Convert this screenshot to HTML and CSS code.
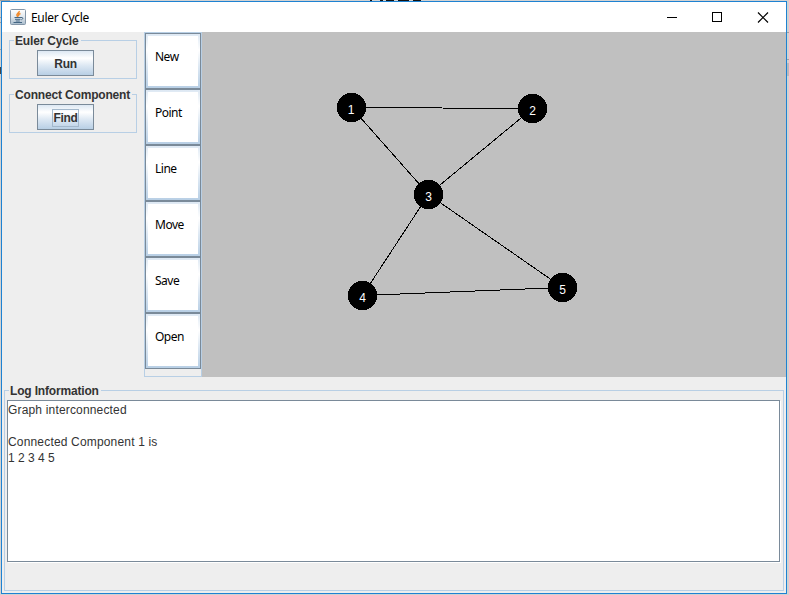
FILE: index.html
```html
<!DOCTYPE html>
<html lang="en">
<head>
<meta charset="utf-8">
<title>Euler Cycle</title>
<link rel="stylesheet" href="styles.css">
</head>
<body>
<svg class="desktop" width="789" height="595" shape-rendering="crispEdges" aria-hidden="true">
  <path fill="#a0a0a0" d="M0 0h10v1H0zM0 17h1v1H0zM0 22h1v1H0zM0 49h1v1H0zM787 32h2v1h-2zM787 59h2v1h-2z"/>
  <path fill="#444" d="M0 67h1v7H0z"/>
  <path fill="#b9b9bd" d="M787 63h2v13h-2z"/>
  <path fill="#111" d="M370 0h2v1h-2zM380 0h3v1h-3zM386 0h8v1h-8zM398 0h11v1h-11zM413 0h8v1h-8z"/>
</svg>
<div class="window">
  <header class="titlebar">
    <svg class="app-icon" width="16" height="16" viewBox="0 0 16 16">
      <defs><linearGradient id="tile" x2="0" y2="1"><stop stop-color="#fff"/><stop offset=".5" stop-color="#e0e7ed"/><stop offset="1" stop-color="#a9bccc"/></linearGradient></defs>
      <rect x=".5" y=".5" width="15" height="15" rx="1" fill="url(#tile)" stroke="#8496a8"/>
      <path d="M9.2 2C9.8 4 6 4.500 7 6.500L8 8M10.500 4.500C8 5.500 8.300 6 9 7" fill="none" stroke="#f08a2c" stroke-width="1.500"/>
      <path d="M4.500 8.500h6.500M5 10.300h5.500M5.800 12h4M11 8.500c2.500-.5 2.300 1.700.3 2.300M3.500 13.500h8.500" fill="none" stroke="#446684"/>
    </svg>
    <span class="title">Euler Cycle</span>
    <svg class="controls" width="102" height="11" shape-rendering="crispEdges" fill="none" stroke="#000">
      <path d="M0 5.500h10M45.500.5h9v9h-9z"/>
      <path d="M91 .5l10 10M101 .5l-10 10" shape-rendering="auto" stroke-width="1.200"/>
    </svg>
  </header>
  <main class="workspace">
    <aside class="sidebar">
      <fieldset class="group"><legend>Euler Cycle</legend><button class="action">Run</button></fieldset>
      <fieldset class="group"><legend>Connect Component</legend><button class="action"><span class="focus">Find</span></button></fieldset>
    </aside>
    <nav class="tools">
      <button class="tool"><span>New</span></button>
      <button class="tool"><span>Point</span></button>
      <button class="tool"><span>Line</span></button>
      <button class="tool"><span>Move</span></button>
      <button class="tool"><span>Save</span></button>
      <button class="tool"><span>Open</span></button>
    </nav>
    <svg class="canvas" width="584" height="345" viewBox="202 32 584 345">
      <g stroke="#000" fill="none" shape-rendering="crispEdges">
        <path d="M351.500 107.500L532.500 108.500L428.500 194.500zM428.500 194.500L362.500 295.500L562.500 287.500z"/>
      </g>
      <g class="nodes" shape-rendering="crispEdges">
        <circle cx="351.500" cy="107.500" r="14.700"/>
        <circle cx="532.500" cy="108.500" r="14.700"/>
        <circle cx="428.500" cy="194.500" r="14.700"/>
        <circle cx="362.500" cy="295.500" r="14.700"/>
        <circle cx="562.500" cy="287.500" r="14.700"/>
      </g>
      <g class="labels">
        <text x="351" y="114">1</text>
        <text x="532.500" y="115">2</text>
        <text x="428.500" y="201">3</text>
        <text x="362.500" y="302">4</text>
        <text x="562.500" y="294">5</text>
      </g>
    </svg>
  </main>
  <fieldset class="log">
    <legend>Log Information</legend>
    <div class="log-text"><span>Graph interconnected</span>

<span>Connected Component 1 is</span>
1 2 3 4 5</div>
  </fieldset>
</div>
</body>
</html>
```
FILE: styles.css
```css
* { box-sizing: border-box; }
body {
  margin: 0;
  width: 789px;
  height: 595px;
  padding: 1px;
  overflow: hidden;
  background: #d2d2d2;
  font-family: "Liberation Sans", Arial, sans-serif;
  font-size: 12px;
  color: #333;
}
.desktop { position: absolute; left: 0; top: 0; }
.window {
  position: relative;
  width: 786px;
  height: 593px;
  border: 1px solid #1e82d2;
  background: #eee;
  display: flex;
  flex-direction: column;
}
.titlebar {
  height: 30px;
  flex: none;
  background: #fff;
  display: flex;
  align-items: center;
  padding: 0 17px 0 8px;
}
.title {
  margin-left: 5px;
  font-family: "Noto Sans", sans-serif;
  font-size: 12px;
  letter-spacing: -0.3px;
  color: #000;
}
.controls { margin-left: auto; }
.workspace { display: flex; height: 345px; flex: none; }
.sidebar { width: 142px; padding: 2px 7px 0; }
fieldset { margin: 0; min-width: 0; border: 1px solid #b8cfe5; }
legend {
  font-weight: bold;
  letter-spacing: -0.17px;
  line-height: 14px;
  height: 13px;
  padding: 0 2px 0 1px;
  white-space: nowrap;
}
.group {
  width: 128px;
  height: 45px;
  padding: 3px 0 0 27px;
  margin-bottom: 9px;
}
.group legend { margin-left: -23px; }
button { font-family: inherit; border-radius: 0; }
.action {
  display: flex;
  align-items: center;
  justify-content: center;
  width: 57px;
  height: 26px;
  padding: 1px 0 0;
  border: 1px solid #7a8a99;
  background: linear-gradient(#dde8f3, #fff 30%, #dde8f3 60%, #b8cfe5);
  font-weight: bold;
  font-size: 12px;
  letter-spacing: -0.3px;
  color: #333;
}
.focus { outline: 1px solid #a3b8cc; line-height: 16px; }
.tools {
  width: 58px;
  border: 1px solid #b8cfe5;
  display: flex;
  flex-direction: column;
}
.tool {
  width: 56px;
  height: 56px;
  padding: 2px;
  border: 1px solid #7a8a99;
  background: linear-gradient(#dde8f3, #fff 30%, #dde8f3 60%, #b8cfe5);
}
.tool span {
  display: block;
  width: 50px;
  height: 50px;
  padding: 12px 0 0 7px;
  background: #fff;
  text-align: left;
  font: 12px/17px "Noto Sans", sans-serif;
  letter-spacing: -0.5px;
  color: #000;
}
.canvas { display: block; background: #c0c0c0; }
.labels {
  fill: #fff;
  font-size: 12px;
  text-anchor: middle;
}
.log {
  width: 780px;
  height: 207px;
  margin: 7px 0 0 2px;
  padding: 3px 2px 0;
}
.log legend { margin-left: 2px; }
.log-text {
  width: 773px;
  height: 162px;
  padding: 1px 0;
  border: 1px solid #7a8a99;
  box-shadow: 1px 1px #fff;
  background: #fff;
  white-space: pre;
  line-height: 16px;
}
.log-text span { letter-spacing: 0.17px; }
```
